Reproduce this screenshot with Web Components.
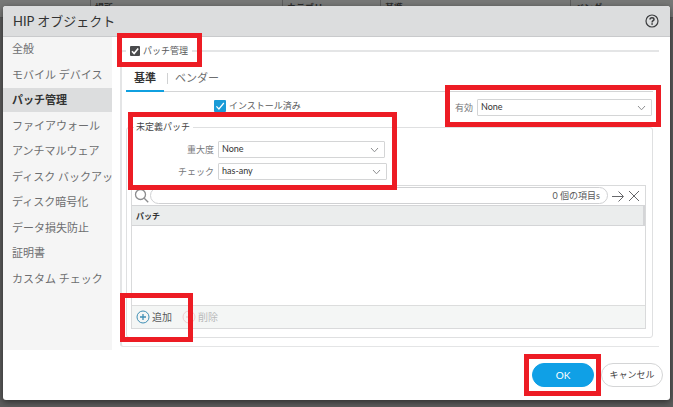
<!DOCTYPE html>
<html lang="ja">
<head>
<meta charset="utf-8">
<title>HIP オブジェクト</title>
<style>
    body {
        margin: 0;
        min-height: 100vh;
        display: grid;
        font-family: Lato, "Noto Sans CJK JP", sans-serif;
        font-size: 9px;
        line-height: 12px;
        color: #58595b;
        background: #5c5c5c;
    }

    backdrop-table,
    hip-dialog {
        grid-area: 1 / 1;
    }
</style>
</head>
<body>

<backdrop-table></backdrop-table>

<hip-dialog heading="HIP オブジェクト">
    <side-menu slot="menu"></side-menu>

    <patch-panel>
        <tab-strip></tab-strip>

        <criteria-row></criteria-row>

        <group-box heading="未定義パッチ">
            <red-frame style="--inset: -29px auto -5px -3px; --width: 269px">
                <select-field label="重大度" value="None" style="--label: 83px; --box: 167px"></select-field>
                <select-field label="チェック" value="has-any" style="--label: 83px; --box: 169px"></select-field>
            </red-frame>
            <patch-grid></patch-grid>
        </group-box>
    </patch-panel>

    <red-frame slot="actions" style="--inset: -9px -7px -9px -8px">
        <pill-button primary>OK</pill-button>
    </red-frame>
    <pill-button slot="actions">キャンセル</pill-button>
</hip-dialog>

<script>
    class BaseElement extends HTMLElement {

        constructor() {
            super();
            this.shadowDOM = this.attachShadow({mode: "open"});
        }

        connectedCallback() {
            this.render();
        }
    }

    // list page that stays visible behind the dialog
    class BackdropTable extends BaseElement {

        render() {
            this.shadowDOM.innerHTML = `
                <style>
                    :host {
                        display: block;
                        overflow: hidden;
                    }

                    .head {
                        display: grid;
                        grid-template-columns: 90fr 192fr 98fr 190fr 103fr;
                        height: 18px;
                        box-sizing: border-box;
                        background: #777877;
                        border-bottom: 1px solid #555;
                        color: #2c2c2c;
                        font-weight: bold;
                    }

                    .head span + span {
                        padding: 2px 4px 0;
                        border-left: 1px solid #5c5c5c;
                    }
                </style>

                <div class="head">
                    <span></span><span>場所</span><span>カテゴリ</span><span>基準</span><span>ベンダー</span>
                </div>
            `;
        }
    }

    class HipDialog extends BaseElement {

        render() {
            this.shadowDOM.innerHTML = `
                <style>
                    :host {
                        display: flex;
                        flex-direction: column;
                        margin: 6px 3px 7px;
                        border-radius: 3px;
                        background: #fff;
                        box-shadow: 0 2px 6px rgba(0, 0, 0, 0.5);
                        position: relative;
                    }

                    header {
                        display: flex;
                        align-items: center;
                        justify-content: space-between;
                        height: 30px;
                        padding: 0 11px 0 10px;
                        border-bottom: 1px solid #c9cacc;
                        border-radius: 3px 3px 0 0;
                        background: #dcddde;
                    }

                    h1 {
                        margin: 0;
                        font-size: 13px;
                        font-weight: normal;
                        line-height: 20px;
                        color: #333;
                    }

                    button {
                        padding: 0;
                        border: 0;
                        background: none;
                        display: flex;
                    }

                    .content {
                        flex: 1;
                        display: flex;
                        align-items: flex-start;
                        gap: 8px;
                        padding-right: 11px;
                    }

                    main {
                        flex: 1;
                        min-width: 0;
                        display: flex;
                    }

                    footer {
                        display: flex;
                        justify-content: flex-end;
                        gap: 7px;
                        padding: 13px 7px 13px 8px;
                    }
                </style>

                <header>
                    <h1>${this.getAttribute("heading")}</h1>
                    <button type="button" aria-label="ヘルプ">
                        <svg width="14" height="14" viewBox="0 0 14 14" fill="none" stroke="#3c3d3f">
                            <circle cx="7" cy="7" r="6" stroke-width="1.2"/>
                            <path d="M5 5.600C5 4.300 5.900 3.700 7 3.700s2 .7 2 1.700C9 6.700 7.100 6.700 7.100 8.400" stroke-width="1.500"/>
                            <path d="M7.100 9.300v1.500" stroke-width="1.600"/>
                        </svg>
                    </button>
                </header>
                <div class="content">
                    <slot name="menu"></slot>
                    <main><slot></slot></main>
                </div>
                <footer><slot name="actions"></slot></footer>
            `;
        }
    }

    class SideMenu extends BaseElement {

        render() {
            const items = ["全般", "モバイル デバイス", "パッチ管理", "ファイアウォール", "アンチマルウェア",
                "ディスク バックアップ", "ディスク暗号化", "データ損失防止", "証明書", "カスタム チェック"];

            this.shadowDOM.innerHTML = `
                <style>
                    :host {
                        display: block;
                        flex: 0 0 109px;
                        width: 109px;
                        min-height: 313px;
                        background: #f5f5f5;
                    }

                    nav {
                        display: flex;
                        flex-direction: column;
                        justify-content: space-between;
                        min-height: 254px;
                    }

                    a {
                        padding-left: 9px;
                        font-size: 11px;
                        line-height: 24px;
                        white-space: nowrap;
                        overflow: hidden;
                        color: #6d6e70;
                        text-decoration: none;
                    }

                    a[aria-current] {
                        background: #dcddde;
                        color: #333;
                        font-weight: bold;
                    }
                </style>

                <nav>
                    ${items.map(item => `<a href="#"${item === "パッチ管理" ? ' aria-current="page"' : ""}>${item}</a>`).join("")}
                </nav>
            `;
        }
    }

    // red marker drawn around whatever is slotted in
    class RedFrame extends BaseElement {

        render() {
            this.shadowDOM.innerHTML = `
                <style>
                    :host {
                        display: block;
                        position: relative;
                    }

                    .frame {
                        position: absolute;
                        z-index: 1;
                        inset: var(--inset);
                        width: var(--width, auto);
                        box-sizing: border-box;
                        border: 5px solid #ed1c24;
                        pointer-events: none;
                    }
                </style>

                <slot></slot>
                <div class="frame"></div>
            `;
        }
    }

    class CheckField extends BaseElement {

        render() {
            this.shadowDOM.innerHTML = `
                <style>
                    :host {
                        display: block;
                    }

                    label {
                        display: flex;
                        align-items: center;
                        gap: 3px;
                        white-space: nowrap;
                    }

                    .box {
                        display: grid;
                    }

                    .box > * {
                        grid-area: 1 / 1;
                        width: var(--size, 10px);
                        height: var(--size, 10px);
                    }

                    input {
                        appearance: none;
                        margin: 0;
                        border-radius: 1px;
                        background: var(--tick, #4a4b4d);
                    }

                    svg {
                        pointer-events: none;
                        z-index: 0;
                    }
                </style>

                <label>
                    <span class="box">
                        <input type="checkbox" checked>
                        <svg viewBox="0 0 10 10" fill="none" stroke="#fff" stroke-width="${this.getAttribute("stroke") || 1}">
                            <path d="M2 5.300 4.100 7.500 8.200 2.500"/>
                        </svg>
                    </span>
                    ${this.getAttribute("label")}
                </label>
            `;
        }
    }

    class PatchPanel extends BaseElement {

        render() {
            this.shadowDOM.innerHTML = `
                <style>
                    :host {
                        flex: 1;
                        min-width: 0;
                        display: block;
                    }

                    fieldset {
                        min-width: 0;
                        margin: 8px 0 0;
                        padding: 11px 6px 8px 4px;
                        border: solid #e4e5e6;
                        border-width: 2px 0 1px 2px;
                        border-radius: 3px 0 0 3px;
                    }

                    legend {
                        padding: 0 4px;
                    }
                </style>

                <fieldset>
                    <legend>
                        <red-frame style="--inset: -12px -14px -10px -13px">
                            <check-field label="パッチ管理" stroke="1.6"></check-field>
                        </red-frame>
                    </legend>
                    <slot></slot>
                </fieldset>
            `;
        }
    }

    class TabStrip extends BaseElement {

        render() {
            this.shadowDOM.innerHTML = `
                <style>
                    :host {
                        display: flex;
                        border-bottom: 1px solid #d4d5d6;
                        font-size: 11px;
                    }

                    button {
                        padding: 0 9px 2px;
                        height: 23px;
                        border: 0;
                        border-bottom: 2px solid transparent;
                        background: none;
                        font: inherit;
                        line-height: 16px;
                        color: #6d6e70;
                    }

                    button[aria-selected=true] {
                        padding: 0 8px 2px;
                        margin-bottom: -1px;
                        height: 24px;
                        border-color: #10a0e0;
                        color: #333;
                        font-weight: bold;
                    }

                    i {
                        width: 1px;
                        height: 11px;
                        margin: 5px -2px 0 3px;
                        background: #d0d1d2;
                    }
                </style>

                <button type="button" role="tab" aria-selected="true">基準</button>
                <i></i>
                <button type="button" role="tab" aria-selected="false">ベンダー</button>
            `;
        }
    }

    class CriteriaRow extends BaseElement {

        render() {
            this.shadowDOM.innerHTML = `
                <style>
                    :host {
                        display: flex;
                        justify-content: space-between;
                        height: 29px;
                        padding: 7px 1px 0 88px;
                        box-sizing: border-box;
                    }

                    check-field {
                        --size: 12px;
                        --tick: #1a9bd7;
                        padding-top: 1px;
                    }
                </style>

                <check-field label="インストール済み"></check-field>
                <red-frame style="--inset: -14px -9px -6px -10px">
                    <select-field label="有効" value="None" style="--label: 18px; --box: 175px"></select-field>
                </red-frame>
            `;
        }
    }

    class GroupBox extends BaseElement {

        render() {
            this.shadowDOM.innerHTML = `
                <style>
                    :host {
                        display: block;
                    }

                    fieldset {
                        min-width: 0;
                        margin: 0;
                        padding: 8px 6px 8px 4px;
                        border: 1px solid #dfe0e1;
                        border-radius: 3px;
                    }

                    legend {
                        margin-left: 3px;
                        padding: 0 3px 0 2px;
                        color: #444;
                    }
                </style>

                <fieldset>
                    <legend>${this.getAttribute("heading")}</legend>
                    <slot></slot>
                </fieldset>
            `;
        }
    }

    class SelectField extends BaseElement {

        render() {
            this.shadowDOM.innerHTML = `
                <style>
                    :host {
                        display: block;
                        padding-bottom: 5px;
                    }

                    label {
                        display: flex;
                        align-items: center;
                        gap: 4px;
                        white-space: nowrap;
                        color: #77787b;
                    }

                    .text {
                        width: var(--label);
                        text-align: right;
                    }

                    .box {
                        display: grid;
                        align-items: center;
                        width: var(--box);
                    }

                    .box > * {
                        grid-area: 1 / 1;
                    }

                    select {
                        appearance: none;
                        width: 100%;
                        height: 17px;
                        margin: 0;
                        padding: 0 16px 2px 3px;
                        border: 1px solid #d4d5d6;
                        border-radius: 1px;
                        background: #fff;
                        font: inherit;
                        color: #333;
                    }

                    svg {
                        justify-self: end;
                        margin-right: 6px;
                        pointer-events: none;
                    }
                </style>

                <label>
                    <span class="text">${this.getAttribute("label")}</span>
                    <span class="box">
                        <select><option>${this.getAttribute("value")}</option></select>
                        <svg width="9" height="6" viewBox="0 0 9 6" fill="none" stroke="#8f9092">
                            <path d="M1 1 4.500 4.800 8 1"/>
                        </svg>
                    </span>
                </label>
            `;
        }
    }

    class PatchGrid extends BaseElement {

        render() {
            this.shadowDOM.innerHTML = `
                <style>
                    :host {
                        display: block;
                        border: 1px solid #d9dadb;
                        color: #58595b;
                    }

                    .search {
                        display: flex;
                        align-items: center;
                        height: 19px;
                        padding: 0 5px 0 2px;
                    }

                    .pill {
                        flex: 1;
                        min-width: 0;
                        display: flex;
                        align-items: center;
                        height: 17px;
                        box-sizing: border-box;
                        padding: 0 7px;
                        border: 1px solid #d0d1d3;
                        border-radius: 9px;
                    }

                    input {
                        flex: 1;
                        min-width: 0;
                        height: 13px;
                        padding: 0;
                        border: 0;
                        outline: 0;
                        font: inherit;
                    }

                    button {
                        display: flex;
                        align-items: center;
                        gap: 2px;
                        padding: 0;
                        border: 0;
                        background: none;
                        font: inherit;
                        color: #58595b;
                    }

                    .search button {
                        margin-left: 4px;
                    }

                    table {
                        width: 100%;
                        border-collapse: collapse;
                    }

                    th {
                        height: 19px;
                        padding: 0 4px;
                        border: 1px solid #d4d5d7;
                        border-width: 1px 2px 1px 0;
                        background: #ebeded;
                        font-size: 8px;
                        line-height: 12px;
                        text-align: left;
                        color: #333;
                    }

                    td {
                        height: 79px;
                        padding: 0;
                    }

                    .tools {
                        display: flex;
                        align-items: center;
                        gap: 10px;
                        height: 22px;
                        padding: 0 4px;
                        border-top: 1px solid #dcdddd;
                        background: #f4f6f5;
                    }

                    .tools button {
                        font-size: 10px;
                    }

                    button:disabled {
                        color: #b9babb;
                    }
                </style>

                <div class="search">
                    <svg width="16" height="16" viewBox="0 0 16 16" fill="none" stroke="#8b8c8e" stroke-width="1.300">
                        <circle cx="6.500" cy="6.500" r="5"/>
                        <path d="m10.200 10.200 4 4"/>
                    </svg>
                    <label class="pill"><input type="text" aria-label="検索">0 個の項目s</label>
                    <button type="button" aria-label="適用">
                        <svg width="12" height="12" viewBox="0 0 12 12" fill="none" stroke="#66676a">
                            <path d="M0 6.500h11M6.500 1.500l5 5-5 5"/>
                        </svg>
                    </button>
                    <button type="button" aria-label="クリア">
                        <svg width="12" height="12" viewBox="0 0 12 12" fill="none" stroke="#66676a">
                            <path d="m1 1 10 10M11 1 1 11"/>
                        </svg>
                    </button>
                </div>
                <table>
                    <thead><tr><th>パッチ</th></tr></thead>
                    <tbody><tr><td></td></tr></tbody>
                </table>
                <div class="tools">
                    <red-frame style="--inset: -17px -21px -18px -16px">
                        <button type="button">
                            <svg width="14" height="14" viewBox="0 0 14 14" fill="none" stroke="#3f8fb5">
                                <circle cx="7" cy="7" r="6"/>
                                <path d="M4 7h6M7 4v6" stroke-width="1.300"/>
                            </svg>
                            追加
                        </button>
                    </red-frame>
                    <button type="button" disabled>
                        <svg width="14" height="14" viewBox="0 0 14 14" fill="none" stroke="#f0cdd0">
                            <circle cx="7" cy="7" r="6"/>
                            <path d="M4 7h6" stroke-width="1.300"/>
                        </svg>
                        削除
                    </button>
                </div>
            `;
        }
    }

    class PillButton extends BaseElement {

        render() {
            this.shadowDOM.innerHTML = `
                <style>
                    :host {
                        display: block;
                    }

                    button {
                        width: 62px;
                        height: 24px;
                        padding: 0;
                        border: 1px solid #d4d5d6;
                        border-radius: 12px;
                        background: #fff;
                        font: inherit;
                        color: #444;
                        white-space: nowrap;
                    }

                    :host([primary]) button {
                        border-color: #0fa0e6;
                        background: #0fa0e6;
                        font-size: 10px;
                        color: #fff;
                    }
                </style>

                <button type="button"><slot></slot></button>
            `;
        }
    }

    customElements.define("backdrop-table", BackdropTable);
    customElements.define("hip-dialog", HipDialog);
    customElements.define("side-menu", SideMenu);
    customElements.define("red-frame", RedFrame);
    customElements.define("check-field", CheckField);
    customElements.define("patch-panel", PatchPanel);
    customElements.define("tab-strip", TabStrip);
    customElements.define("criteria-row", CriteriaRow);
    customElements.define("group-box", GroupBox);
    customElements.define("select-field", SelectField);
    customElements.define("patch-grid", PatchGrid);
    customElements.define("pill-button", PillButton);
</script>
</body>
</html>
